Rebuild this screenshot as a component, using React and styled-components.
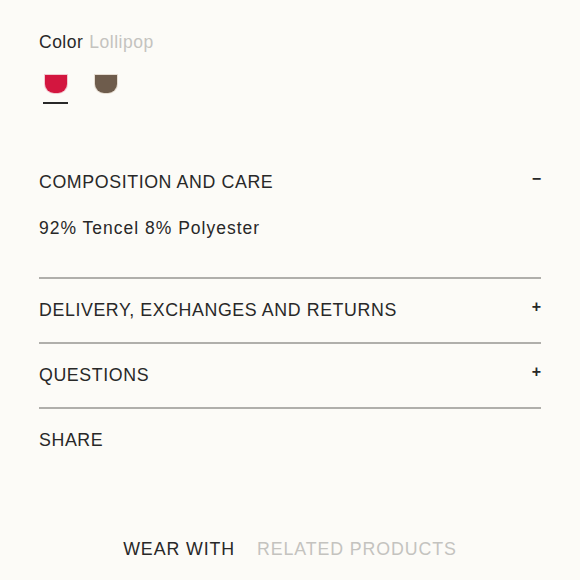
import React from "react";
import styled, { createGlobalStyle } from "styled-components";

const Global = createGlobalStyle`
  html, body { margin: 0; padding: 0; background: #fcfbf7; }
  body { font-family: "Liberation Sans", Arial, sans-serif; color: #282828; }
`;

const Page = styled.div`
  width: 580px;
  height: 580px;
  box-sizing: border-box;
  padding: 31px 39px 0 39px;
  display: flex;
  flex-direction: column;
`;

const ColorLabel = styled.div`
  font-size: 17.5px;
  line-height: 22px;
  letter-spacing: 0.5px;
  display: flex;
  gap: 6px;
`;

const Muted = styled.span`
  color: #c4c3bf;
`;

const Swatches = styled.div`
  display: flex;
  gap: 25px;
  margin-top: 22px;
  padding-left: 4px;
`;

const SwatchItem = styled.div`
  display: flex;
  flex-direction: column;
  align-items: center;
  gap: 9px;
`;

const Swatch = styled.div`
  width: 22px;
  height: 18px;
  background: ${(p) => p.$color};
  border-radius: 0 0 9px 9px;
  box-shadow: 0 0 0 1px ${(p) => p.$halo};
`;

const Underline = styled.div`
  width: 25px;
  height: 2px;
  background: ${(p) => (p.$active ? "#282828" : "transparent")};
`;

const Section = styled.div`
  border-bottom: ${(p) => (p.$divider ? "2px solid #b0afab" : "none")};
  padding: ${(p) => p.$pad};
`;

const Header = styled.div`
  display: flex;
  justify-content: space-between;
  align-items: flex-start;
`;

const Title = styled.div`
  font-size: 17.8px;
  line-height: 22px;
  letter-spacing: 0.6px;
  text-transform: uppercase;
`;

const Toggle = styled.span`
  font-size: 16px;
  line-height: 16px;
  font-weight: bold;
`;

const Body = styled.div`
  font-size: 17.5px;
  line-height: 22px;
  letter-spacing: 1px;
  margin-top: 24px;
`;

const Tabs = styled.div`
  display: flex;
  justify-content: center;
  gap: 22px;
  margin-top: auto;
  margin-bottom: 20px;
  font-size: 17.8px;
  letter-spacing: 0.9px;
`;

const Tab = styled.span`
  color: ${(p) => (p.$active ? "#282828" : "#c4c3bf")};
`;

export default function App() {
  return (
    <>
      <Global />
      <Page>
        <ColorLabel>
          <span>Color</span>
          <Muted>Lollipop</Muted>
        </ColorLabel>
        <Swatches>
          <SwatchItem>
            <Swatch $color="#d3163f" $halo="#f2c9d0" />
            <Underline $active />
          </SwatchItem>
          <SwatchItem>
            <Swatch $color="#6e5c4c" $halo="#e6ddd2" />
            <Underline />
          </SwatchItem>
        </Swatches>
        <Section $divider $pad="67px 0 38px">
          <Header>
            <Title>Composition and care</Title>
            <Toggle>−</Toggle>
          </Header>
          <Body>92% Tencel 8% Polyester</Body>
        </Section>
        <Section $divider $pad="20px 0 21px">
          <Header>
            <Title>Delivery, exchanges and returns</Title>
            <Toggle>+</Toggle>
          </Header>
        </Section>
        <Section $divider $pad="20px 0 21px">
          <Header>
            <Title>Questions</Title>
            <Toggle>+</Toggle>
          </Header>
        </Section>
        <Section $pad="20px 0 0">
          <Title>Share</Title>
        </Section>
        <Tabs>
          <Tab $active>WEAR WITH</Tab>
          <Tab>RELATED PRODUCTS</Tab>
        </Tabs>
      </Page>
    </>
  );
}
